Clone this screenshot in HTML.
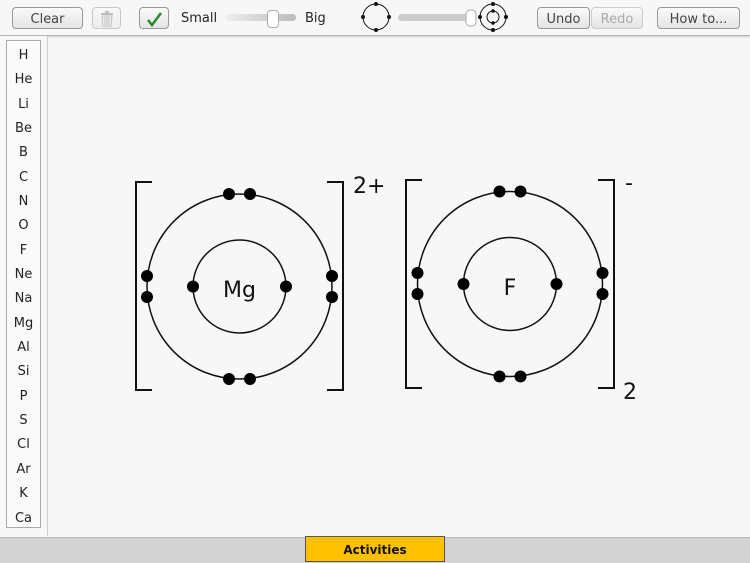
<!DOCTYPE html>
<html><head><meta charset="utf-8"><style>
body{margin:0;width:750px;height:562px;background:#f7f7f7;font-family:"DejaVu Sans","Liberation Sans",sans-serif;position:relative;overflow:hidden}
.tb{position:absolute;left:0;top:0;width:750px;height:35px;background:#f7f7f7;border-bottom:1px solid #b5b5b5;box-shadow:0 1px 2px #ccc}
.btn{position:absolute;top:7px;height:22px;border:1px solid #999;border-radius:4px;background:linear-gradient(#fafafa,#e4e4e4);font-size:13px;color:#444;text-align:center;line-height:23px;box-sizing:border-box}
.lbl{position:absolute;top:11px;font-size:13px;color:#222}
.side{position:absolute;left:0;top:36px;width:47px;height:500px;background:#f7f7f7;border-right:1px solid #ccc}
.box{position:absolute;left:6px;top:40px;width:35px;height:488px;border:1px solid #aaa;box-sizing:border-box;background:#fafafa}
.el{position:absolute;left:6px;width:35px;text-align:center;font-size:13px;color:#222}
.bot{position:absolute;left:0;top:537px;width:750px;height:25px;background:#d2d2d2;border-top:1px solid #bbb}
.act{position:absolute;left:305px;top:536px;width:140px;height:26px;background:#ffc000;border:1px solid #555;box-sizing:border-box;text-align:center;font-weight:bold;font-size:12px;line-height:26px;color:#111}
</style></head><body>
<div class="tb">
<div class="btn" style="left:12px;width:71px;">Clear</div>
<div class="btn" style="left:92px;width:29px;opacity:.5"><svg width="14" height="16" viewBox="0 0 14 16" style="margin-top:3px"><rect x="1" y="2" width="12" height="2" fill="#888"/><rect x="5" y="0" width="4" height="2" fill="#888"/><path d="M2 5h10l-1 11H3z" fill="none" stroke="#888"/><path d="M5 6v9M7 6v9M9 6v9" stroke="#888"/></svg></div>
<div class="btn" style="left:139px;width:30px;"><svg width="18" height="16" viewBox="0 0 18 16" style="margin-top:3px"><path d="M3 9l4 5 9-12" fill="none" stroke="#2a8a2a" stroke-width="2.5"/></svg></div>
<div class="lbl" style="left:181px">Small</div>
<div style="position:absolute;left:226px;top:14px;width:70px;height:7px;border-radius:4px;background:linear-gradient(90deg,#eee,#bbb)"></div>
<div style="position:absolute;left:267px;top:10px;width:10px;height:16px;border-radius:4px;background:#fff;border:1px solid #aaa"></div>
<div class="lbl" style="left:305px">Big</div>
<svg style="position:absolute;left:358px;top:0" width="150" height="35">
<circle cx="18" cy="17" r="13" fill="none" stroke="#111"/>
<g fill="#111"><circle cx="18" cy="4" r="2"/><circle cx="18" cy="30" r="2"/><circle cx="5" cy="17" r="2"/><circle cx="31" cy="17" r="2"/></g>
<rect x="40" y="14" width="74" height="7" rx="3.5" fill="#ccc"/>
<rect x="108" y="10" width="10" height="16" rx="4" fill="#fff" stroke="#aaa"/>
<circle cx="135" cy="17" r="13" fill="none" stroke="#111"/><circle cx="135" cy="17" r="6" fill="none" stroke="#111"/>
<g fill="#111"><circle cx="135" cy="4" r="2"/><circle cx="135" cy="30" r="2"/><circle cx="122" cy="17" r="2"/><circle cx="148" cy="17" r="2"/><circle cx="135" cy="11" r="1.8"/><circle cx="135" cy="23" r="1.8"/></g>
</svg>
<div class="btn" style="left:537px;width:53px;">Undo</div>
<div class="btn" style="left:591px;width:52px;color:#aaa;border-color:#ccc">Redo</div>
<div class="btn" style="left:657px;width:83px;">How to...</div>
</div>
<div class="side"></div>
<div class="box"></div>
<div class="el" style="top:48px">H</div><div class="el" style="top:72px">He</div><div class="el" style="top:97px">Li</div><div class="el" style="top:121px">Be</div><div class="el" style="top:145px">B</div><div class="el" style="top:170px">C</div><div class="el" style="top:194px">N</div><div class="el" style="top:218px">O</div><div class="el" style="top:243px">F</div><div class="el" style="top:267px">Ne</div><div class="el" style="top:291px">Na</div><div class="el" style="top:316px">Mg</div><div class="el" style="top:340px">Al</div><div class="el" style="top:364px">Si</div><div class="el" style="top:389px">P</div><div class="el" style="top:413px">S</div><div class="el" style="top:437px">Cl</div><div class="el" style="top:462px">Ar</div><div class="el" style="top:486px">K</div><div class="el" style="top:511px">Ca</div>
<svg style="position:absolute;left:0;top:0" width="750" height="562">
<g fill="none" stroke="#111" stroke-width="2">
<path d="M152 182H136V390H152"/><path d="M327 182H343V390H327"/>
<path d="M422 180H406V388H422"/><path d="M598 180H614V388H598"/>
</g>
<g fill="none" stroke="#111" stroke-width="1.5">
<circle cx="239.5" cy="286.5" r="92.5"/><circle cx="239.5" cy="286.5" r="46.5"/>
<circle cx="510" cy="284" r="92.5"/><circle cx="510" cy="284" r="46.5"/>
</g>
<g fill="#000">
<circle cx="229" cy="194" r="6"/><circle cx="250" cy="194" r="6"/><circle cx="229" cy="379" r="6"/><circle cx="250" cy="379" r="6"/>
<circle cx="147" cy="276" r="6"/><circle cx="147" cy="297" r="6"/><circle cx="332" cy="276" r="6"/><circle cx="332" cy="297" r="6"/>
<circle cx="193" cy="286.5" r="6"/><circle cx="286" cy="286.5" r="6"/>
<circle cx="499.5" cy="191.5" r="6"/><circle cx="520.5" cy="191.5" r="6"/><circle cx="499.5" cy="376.5" r="6"/><circle cx="520.5" cy="376.5" r="6"/>
<circle cx="417.5" cy="273" r="6"/><circle cx="417.5" cy="294" r="6"/><circle cx="602.5" cy="273" r="6"/><circle cx="602.5" cy="294" r="6"/>
<circle cx="463.5" cy="284" r="6"/><circle cx="556.5" cy="284" r="6"/>
</g>
<g font-family="DejaVu Sans, Liberation Sans, sans-serif" fill="#111" font-size="22">
<text x="239.5" y="297" text-anchor="middle">Mg</text>
<text x="510" y="295" text-anchor="middle">F</text>
<text x="353" y="193">2+</text>
<text x="625" y="190">-</text>
<text x="623" y="399">2</text>
</g>
</svg>
<div class="bot"></div>
<div class="act">Activities</div>
</body></html>
